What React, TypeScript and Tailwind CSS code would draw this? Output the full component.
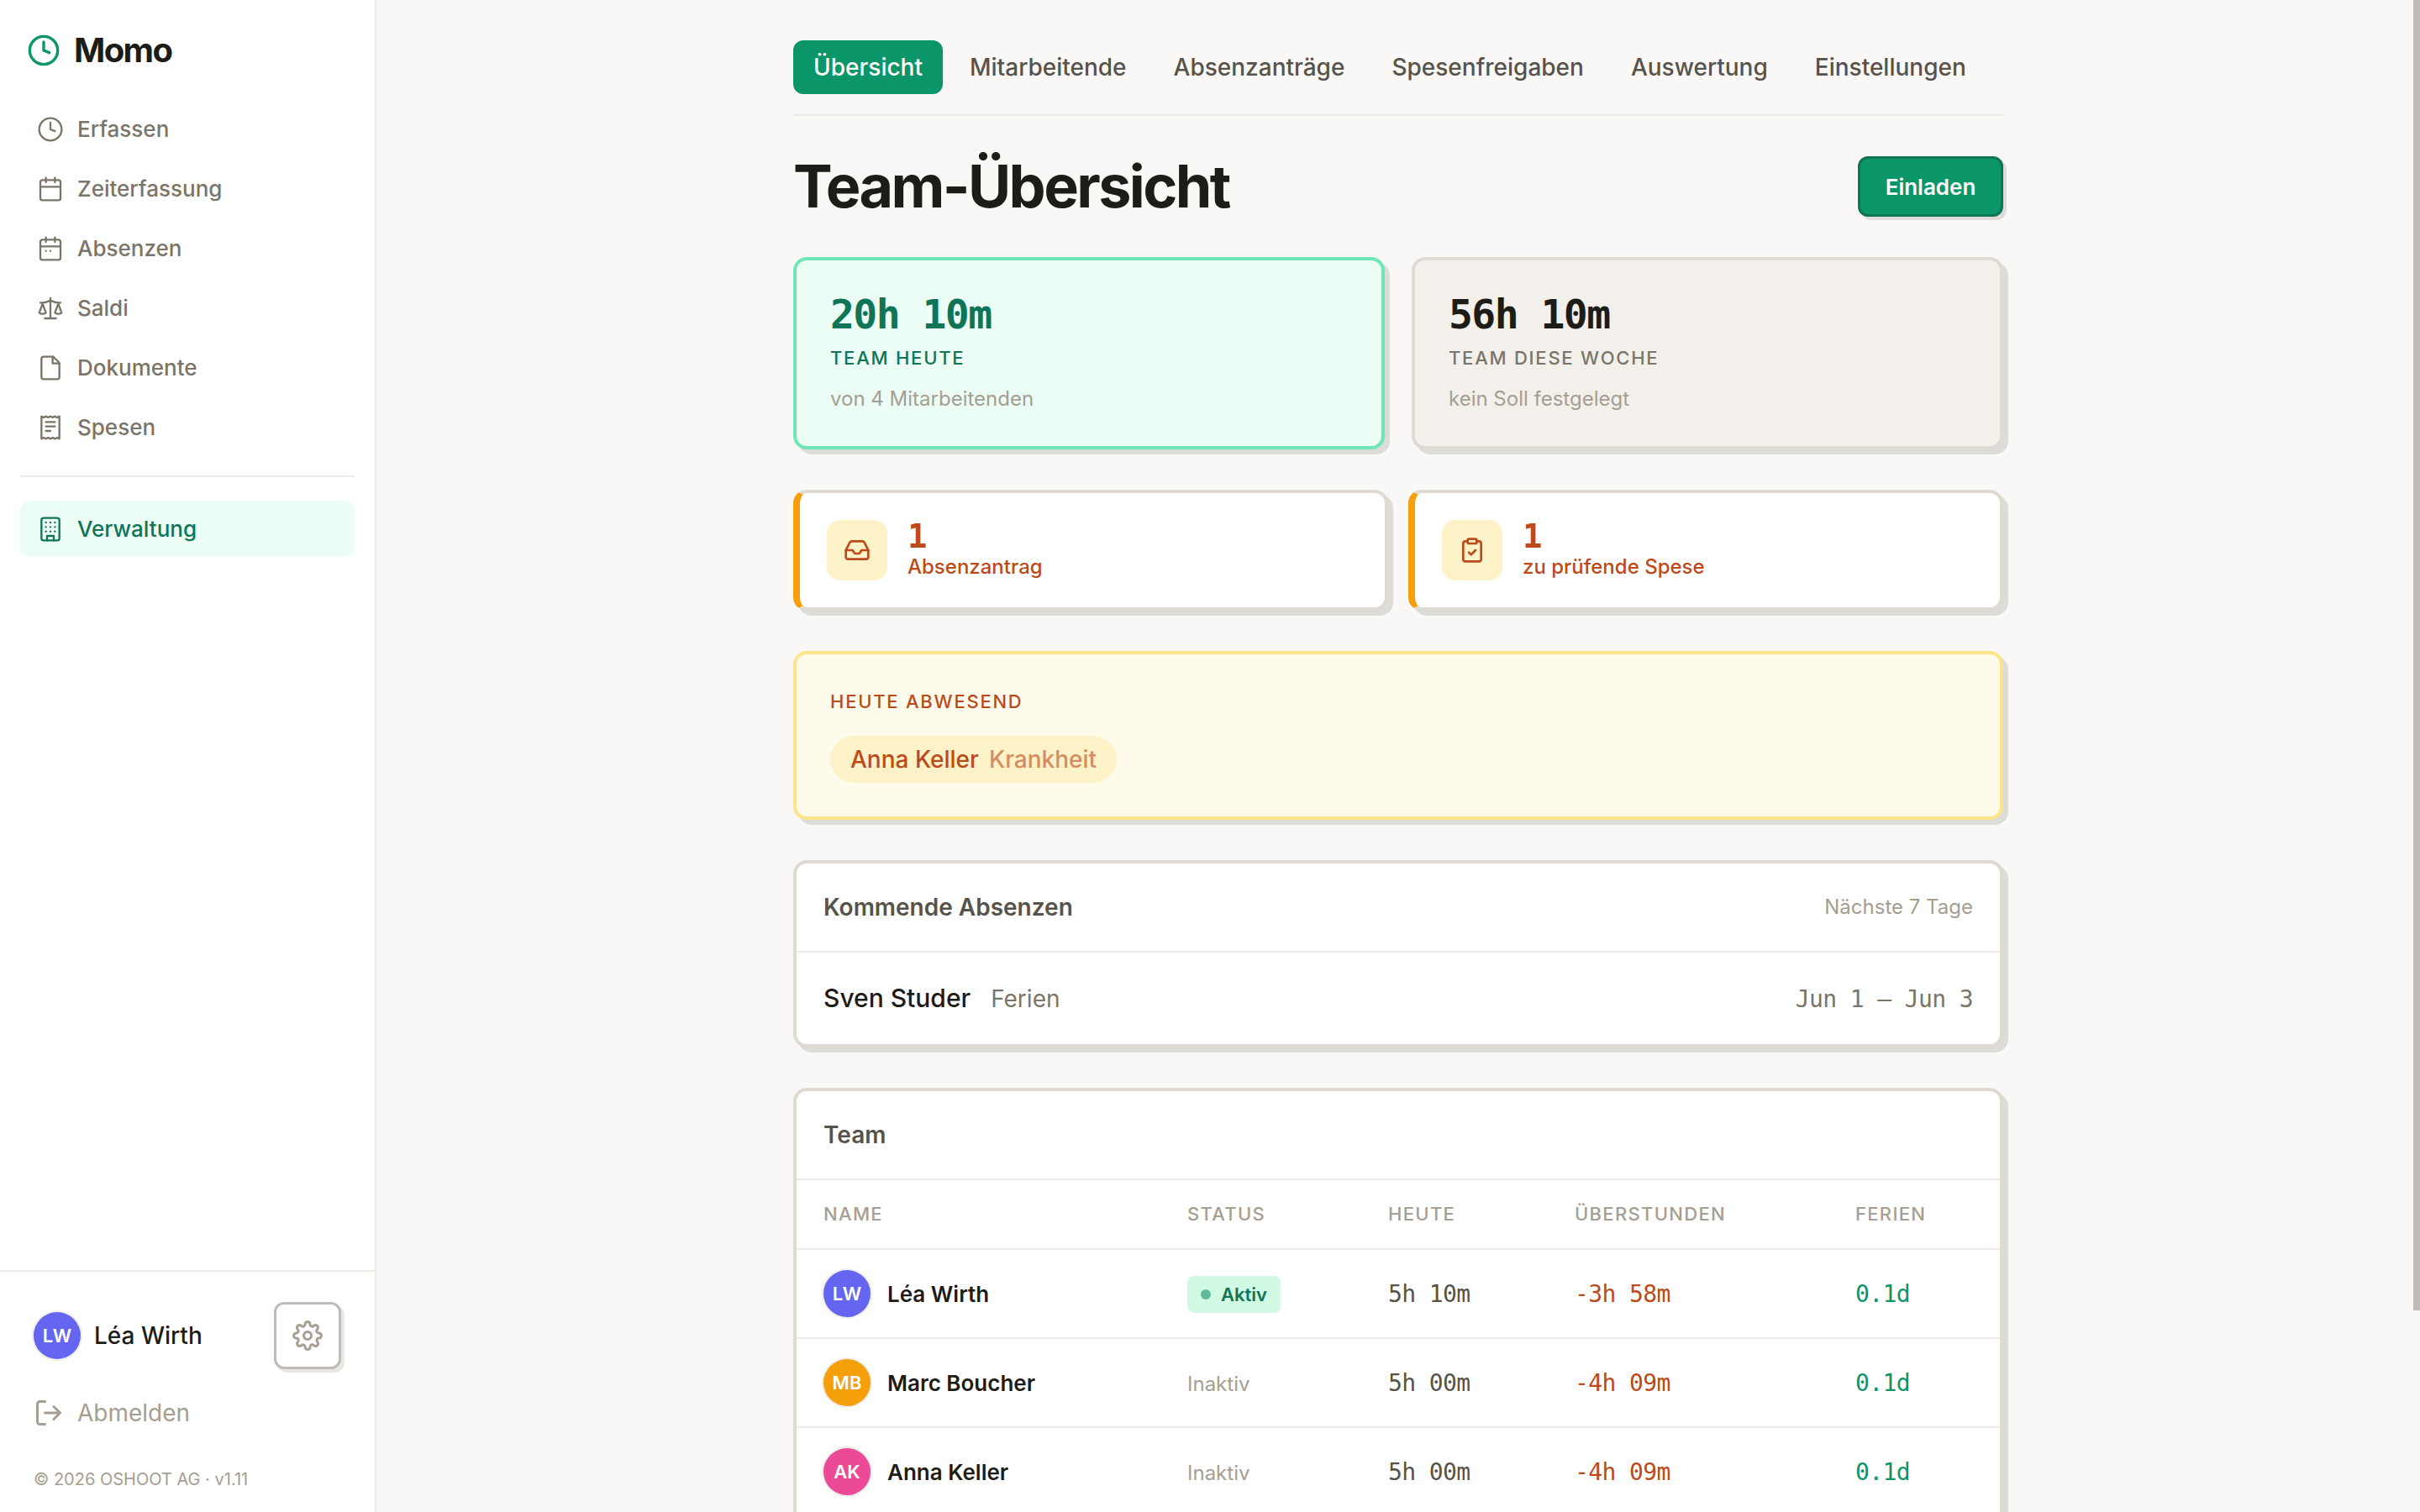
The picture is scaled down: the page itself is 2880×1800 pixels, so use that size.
import type { ReactNode } from 'react';
import clsx from 'clsx';

type IconProps = { className?: string; strokeWidth?: number; children: ReactNode };

const Icon = ({ className, strokeWidth = 1.75, children }: IconProps) => (
  <svg
    viewBox="0 0 24 24"
    fill="none"
    stroke="currentColor"
    strokeWidth={strokeWidth}
    strokeLinecap="round"
    strokeLinejoin="round"
    className={clsx('shrink-0', className)}
  >
    {children}
  </svg>
);

const clock = (
  <>
    <circle cx="12" cy="12" r="10" />
    <path d="M12 6v6l4 1.6" />
  </>
);

const calendar = (
  <>
    <rect x="3" y="4" width="18" height="18" rx="2" />
    <path d="M8 2v4M16 2v4M3 10h18" />
  </>
);

const calendarDots = (
  <>
    {calendar}
    <path d="M8 14h.01M12 14h.01" />
  </>
);

const scale = (
  <>
    <path d="m16 16 3-8 3 8c-.87.65-1.92 1-3 1s-2.13-.35-3-1Z" />
    <path d="m2 16 3-8 3 8c-.87.65-1.92 1-3 1s-2.13-.35-3-1Z" />
    <path d="M7 21h10M12 3v18M3 7h2c2 0 5-1 7-2 2 1 5 2 7 2h2" />
  </>
);

const file = (
  <>
    <path d="M14.5 2H6a2 2 0 0 0-2 2v16a2 2 0 0 0 2 2h12a2 2 0 0 0 2-2V7.5L14.5 2z" />
    <path d="M14 2v6h6" />
  </>
);

const receipt = (
  <>
    <path d="M4 2v20l2-1 2 1 2-1 2 1 2-1 2 1 2-1 2 1V2l-2 1-2-1-2 1-2-1-2 1-2-1-2 1-2-1Z" />
    <path d="M8 7h8M8 11h8M8 15h4" />
  </>
);

const building = (
  <>
    <rect x="4" y="2" width="16" height="20" rx="2" />
    <path d="M9 22v-4h6v4M8 6h.01M12 6h.01M16 6h.01M8 10h.01M12 10h.01M16 10h.01M8 14h.01M12 14h.01M16 14h.01" />
  </>
);

const gear = (
  <>
    <circle cx="12" cy="12" r="3" />
    <path d="M19.4 15a1.65 1.65 0 0 0 .33 1.82l.06.06a2 2 0 0 1 0 2.83 2 2 0 0 1-2.83 0l-.06-.06a1.65 1.65 0 0 0-1.82-.33 1.65 1.65 0 0 0-1 1.51V21a2 2 0 0 1-2 2 2 2 0 0 1-2-2v-.09A1.65 1.65 0 0 0 9 19.4a1.65 1.65 0 0 0-1.82.33l-.06.06a2 2 0 0 1-2.83 0 2 2 0 0 1 0-2.83l.06-.06a1.65 1.65 0 0 0 .33-1.82 1.65 1.65 0 0 0-1.51-1H3a2 2 0 0 1-2-2 2 2 0 0 1 2-2h.09A1.65 1.65 0 0 0 4.6 9a1.65 1.65 0 0 0-.33-1.82l-.06-.06a2 2 0 0 1 0-2.83 2 2 0 0 1 2.83 0l.06.06a1.65 1.65 0 0 0 1.82.33H9a1.65 1.65 0 0 0 1-1.51V3a2 2 0 0 1 2-2 2 2 0 0 1 2 2v.09a1.65 1.65 0 0 0 1 1.51 1.65 1.65 0 0 0 1.82-.33l.06-.06a2 2 0 0 1 2.83 0 2 2 0 0 1 0 2.83l-.06.06a1.65 1.65 0 0 0-.33 1.82V9a1.65 1.65 0 0 0 1.51 1H21a2 2 0 0 1 2 2 2 2 0 0 1-2 2h-.09a1.65 1.65 0 0 0-1.51 1z" />
  </>
);

const logout = <path d="M9 21H5a2 2 0 0 1-2-2V5a2 2 0 0 1 2-2h4M16 17l5-5-5-5M21 12H9" />;

const inbox = (
  <>
    <path d="M22 12h-6l-2 3h-4l-2-3H2" />
    <path d="M5.45 5.11 2 12v6a2 2 0 0 0 2 2h16a2 2 0 0 0 2-2v-6l-3.45-6.89A2 2 0 0 0 16.76 4H7.24a2 2 0 0 0-1.79 1.11z" />
  </>
);

const clipboard = (
  <>
    <rect x="8" y="2" width="8" height="4" rx="1" />
    <path d="M16 4h2a2 2 0 0 1 2 2v14a2 2 0 0 1-2 2H6a2 2 0 0 1-2-2V6a2 2 0 0 1 2-2h2M9 14l2 2 4-4" />
  </>
);

const navItems = [
  { label: 'Erfassen', icon: clock },
  { label: 'Zeiterfassung', icon: calendar },
  { label: 'Absenzen', icon: calendarDots },
  { label: 'Saldi', icon: scale },
  { label: 'Dokumente', icon: file },
  { label: 'Spesen', icon: receipt },
];

const tabs = ['Übersicht', 'Mitarbeitende', 'Absenzanträge', 'Spesenfreigaben', 'Auswertung', 'Einstellungen'];

const members = [
  { name: 'Léa Wirth', initials: 'LW', color: 'bg-[#6466f1]', active: true, today: '5h 10m', overtime: '-3h 58m', vacation: '0.1d' },
  { name: 'Marc Boucher', initials: 'MB', color: 'bg-[#f59f0b]', active: false, today: '5h 00m', overtime: '-4h 09m', vacation: '0.1d' },
  { name: 'Anna Keller', initials: 'AK', color: 'bg-[#ec4997]', active: false, today: '5h 00m', overtime: '-4h 09m', vacation: '0.1d' },
];

const Avatar = ({ initials, color }: { initials: string; color: string }) => (
  <span
    className={clsx(
      'flex size-14 shrink-0 items-center justify-center rounded-full text-[22px] font-semibold text-white ring-2 ring-[#f0eeea]',
      color
    )}
  >
    {initials}
  </span>
);

const NavItem = ({ label, icon, active }: { label: string; icon: ReactNode; active?: boolean }) => (
  <a
    className={clsx(
      'flex h-[67px] items-center gap-4 rounded-xl px-5 text-[26px] font-medium',
      active ? 'bg-[#ebfdf5] text-[#0f7556]' : 'text-[#7a7568]'
    )}
  >
    <Icon className="size-8">{icon}</Icon>
    {label}
  </a>
);

const Sidebar = () => (
  <aside className="flex w-[448px] shrink-0 flex-col border-r-2 border-[#ecebe6] bg-white">
    <div className="flex h-[120px] items-center gap-4 px-8">
      <Icon className="size-10 text-[#0a9668]" strokeWidth={2}>
        {clock}
      </Icon>
      <span className="text-[40px] leading-none font-[650] tracking-[-0.04em] text-[#1e1c17]">Momo</span>
    </div>
    <nav className="flex flex-1 flex-col px-6">
      <div className="flex flex-col gap-1">
        {navItems.map((item) => (
          <NavItem key={item.label} {...item} />
        ))}
      </div>
      <div className="mt-6 mb-7 h-0.5 bg-[#ecebe6]" />
      <NavItem label="Verwaltung" icon={building} active />
    </nav>
    <div className="h-[288px] border-t-2 border-[#ecebe6] px-10 pt-9">
      <div className="flex items-center gap-4">
        <Avatar initials="LW" color="bg-[#6466f1]" />
        <span className="flex-1 text-[28px] font-medium text-[#1e1c17]">Léa Wirth</span>
        <button className="flex size-20 items-center justify-center rounded-xl border-3 border-[#bfbbb6] bg-white text-[#a59e91] shadow-[4px_4px_0_#e9e7e3]">
          <Icon className="size-9" strokeWidth={2}>
            {gear}
          </Icon>
        </button>
      </div>
      <a className="mt-8 flex h-10 items-center gap-4 text-[28px] text-[#a59e91]">
        <Icon className="size-9" strokeWidth={2}>
          {logout}
        </Icon>
        Abmelden
      </a>
      <p className="mt-11 text-[20px] leading-[30px] text-[#a59e91]">© 2026 OSHOOT AG · v1.11</p>
    </div>
  </aside>
);

type StatCardProps = { value: string; label: string; hint: string; highlight?: boolean };

const StatCard = ({ value, label, hint, highlight }: StatCardProps) => (
  <div
    className={clsx(
      'h-[229px] rounded-2xl border-4 px-10 pt-10 shadow-[6px_6px_0_#dedcd8]',
      highlight ? 'border-[#6ee7b7] bg-[#ebfdf5] text-[#0f7556]' : 'border-[#dedad2] bg-[#f3f0eb] text-[#1e1c17]'
    )}
  >
    <p className="font-['DejaVu_Sans_Mono',monospace] text-[48px] leading-[48px] font-bold tracking-[-0.032em]">{value}</p>
    <p
      className={clsx(
        'mt-3 text-[22px] leading-[33px] font-medium tracking-[0.08em] uppercase',
        !highlight && 'text-[#7a7568]'
      )}
    >
      {label}
    </p>
    <p className="mt-3.5 text-[24px] leading-[36px] text-[#a59e91]">{hint}</p>
  </div>
);

const TaskCard = ({ count, label, icon }: { count: number; label: string; icon: ReactNode }) => (
  <div className="flex h-36 items-center gap-6 rounded-2xl border-4 border-l-8 border-[#dedad2] border-l-[#f59f0b] bg-white px-8 text-[#bc4a1a] shadow-[6px_6px_0_#dedcd8]">
    <span className="flex size-[72px] items-center justify-center rounded-2xl bg-[#fef2c8]">
      <Icon className="size-8" strokeWidth={2}>
        {icon}
      </Icon>
    </span>
    <div>
      <p className="pt-1 font-['DejaVu_Sans_Mono',monospace] text-[39px] leading-[36px] font-bold">{count}</p>
      <p className="text-[24px] leading-[36px] font-medium">{label}</p>
    </div>
  </div>
);

const mono = "font-['DejaVu_Sans_Mono',monospace] text-[28px] tracking-[-0.022em]";
const columns = 'grid grid-cols-[433px_239px_222px_334px_1fr] items-center px-8';

const App = () => (
  <div className="flex h-[1800px] w-[2880px] overflow-hidden bg-[#f9f8f6] font-['Inter',sans-serif] text-[#1e1c17]">
    <Sidebar />
    <main className="relative flex flex-1 justify-center">
      <div className="w-[1440px] pt-12">
        <nav className="flex gap-2 border-b-2 border-[#ebe9e4] pb-6">
          {tabs.map((tab, i) => (
            <a
              key={tab}
              className={clsx(
                'rounded-xl px-6 py-3 text-[28px] leading-[40px] font-medium',
                i === 0 ? 'bg-[#0a9668] text-white' : 'text-[#57534a]'
              )}
            >
              {tab}
            </a>
          ))}
        </nav>

        <header className="mt-12 flex h-[72px] items-center justify-between">
          <h1 className="text-[70px] leading-none font-[650] tracking-[-0.037em]">Team-Übersicht</h1>
          <button className="h-[72px] w-[173px] rounded-xl border-3 border-[#0f7556] bg-[#0a9668] text-[26px] font-semibold text-white shadow-[4px_4px_0_#dedcd8]">
            Einladen
          </button>
        </header>

        <section className="mt-12 grid grid-cols-2 gap-8">
          <StatCard value="20h 10m" label="Team heute" hint="von 4 Mitarbeitenden" highlight />
          <StatCard value="56h 10m" label="Team diese Woche" hint="kein Soll festgelegt" />
        </section>

        <section className="mt-12 grid grid-cols-2 gap-6">
          <TaskCard count={1} label="Absenzantrag" icon={inbox} />
          <TaskCard count={1} label="zu prüfende Spese" icon={clipboard} />
        </section>

        <section className="mt-12 h-[201px] rounded-2xl border-4 border-[#fee488] bg-[#fffbea] px-10 pt-10 text-[#bc4a1a] shadow-[6px_6px_0_#dedcd8]">
          <h2 className="text-[22px] leading-[33px] font-medium tracking-[0.08em] uppercase">Heute abwesend</h2>
          <span className="mt-6 inline-flex h-14 items-center gap-3 rounded-full bg-[#fef2c8] px-6 text-[28px] font-medium">
            <span>Anna Keller</span>
            <span className="opacity-60">Krankheit</span>
          </span>
        </section>

        <section className="mt-12 h-[223px] rounded-2xl border-4 border-[#dedad2] bg-white shadow-[6px_6px_0_#dedcd8]">
          <div className="flex h-[106px] items-center justify-between border-b-2 border-[#ecebe6] px-8">
            <h2 className="text-[28px] font-semibold text-[#57534a]">Kommende Absenzen</h2>
            <span className="text-[24px] text-[#a59e91]">Nächste 7 Tage</span>
          </div>
          <div className="flex h-[109px] items-center px-8">
            <span className="text-[30px] font-medium">Sven Studer</span>
            <span className="ml-6 flex-1 pt-px text-[28px] text-[#7a7568]">Ferien</span>
            <span className={clsx(mono, 'pt-0.5 text-[#7a7568]')}>Jun 1 – Jun 3</span>
          </div>
        </section>

        <section className="mt-12 h-[640px] rounded-2xl border-4 border-[#dedad2] bg-white shadow-[6px_6px_0_#dedcd8]">
          <div className="flex h-[106px] items-center border-b-2 border-[#ecebe6] px-8">
            <h2 className="text-[28px] font-semibold text-[#57534a]">Team</h2>
          </div>
          <div
            className={clsx(
              columns,
              'h-[83px] border-b-2 border-[#ecebe6] text-[22px] font-medium tracking-[0.06em] text-[#a59e91] uppercase'
            )}
          >
            <span>Name</span>
            <span>Status</span>
            <span>Heute</span>
            <span>Überstunden</span>
            <span>Ferien</span>
          </div>
          {members.map((m) => (
            <div key={m.name} className={clsx(columns, 'h-[106px] border-b-2 border-[#ecebe6]')}>
              <div className="flex items-center gap-5">
                <Avatar initials={m.initials} color={m.color} />
                <span className="text-[26px] font-semibold">{m.name}</span>
              </div>
              {m.active ? (
                <span className="mt-0.5 flex h-11 items-center gap-3 justify-self-start rounded-lg bg-[#d1fae4] px-4 text-[22px] font-semibold text-[#0f7556]">
                  <span className="size-3 rounded-full bg-[#5fba99]" />
                  Aktiv
                </span>
              ) : (
                <span className="pt-[3px] text-[24px] text-[#a59e91]">Inaktiv</span>
              )}
              <span className={clsx(mono, 'pt-0.5 text-[#57534a]')}>{m.today}</span>
              <span className={clsx(mono, 'pt-0.5 text-[#bc4a1a]')}>{m.overtime}</span>
              <span className={clsx(mono, 'pt-0.5 text-[#0a9668]')}>{m.vacation}</span>
            </div>
          ))}
        </section>
      </div>

      {/* Scrollbar thumb, floats over the content */}
      <div className="absolute top-0 right-0 h-[1560px] w-2 bg-[#bfbbb7]" />
    </main>
  </div>
);

export default App;
